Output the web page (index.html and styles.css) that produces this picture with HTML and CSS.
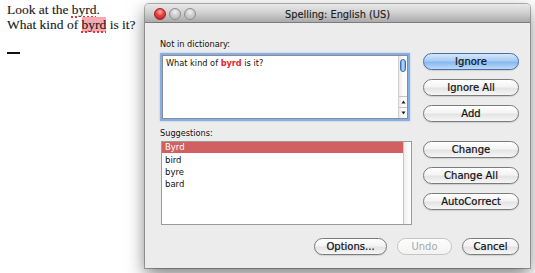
FILE: index.html
```html
<!DOCTYPE html>
<html>
<head>
<meta charset="utf-8">
<link rel="stylesheet" href="styles.css">
</head>
<body>
<div class="doc">
  <p class="line">Look at the <span class="typo">byrd</span>.</p>
  <p class="line">What kind of <span class="typo hl">byrd</span> is it?</p>
  <div class="cursor"></div>
</div>
<div class="window">
  <div class="titlebar">
    <div class="lights">
      <span class="light close"></span>
      <span class="light"></span>
      <span class="light"></span>
    </div>
    <div class="title">Spelling: English (US)</div>
    <div></div>
  </div>
  <div class="content">
    <div class="label">Not in dictionary:</div>
    <div></div>
    <div class="textbox">
      <div class="tb-text">What kind of <b class="miss">byrd</b> is it?</div>
      <div class="vscroll">
        <div class="thumb"></div>
        <div class="track"></div>
        <div class="arrow"><svg width="5" height="4" viewBox="0 0 5 4"><path d="M2.5 0.5 L4.5 3.5 L0.5 3.5 Z" fill="#222"/></svg></div>
        <div class="arrow"><svg width="5" height="4" viewBox="0 0 5 4"><path d="M0.5 0.5 L4.5 0.5 L2.5 3.5 Z" fill="#222"/></svg></div>
      </div>
    </div>
    <div class="btngroup">
      <div class="btn default">Ignore</div>
      <div class="btn">Ignore All</div>
      <div class="btn">Add</div>
    </div>
    <div class="label label2">Suggestions:</div>
    <div></div>
    <div class="list">
      <div class="items">
        <div class="item sel">Byrd</div>
        <div class="item">bird</div>
        <div class="item">byre</div>
        <div class="item">bard</div>
      </div>
      <div class="ltrack"></div>
    </div>
    <div class="btngroup">
      <div class="btn">Change</div>
      <div class="btn">Change All</div>
      <div class="btn">AutoCorrect</div>
    </div>
  </div>
  <div class="footer">
    <div class="btn w-options">Options...</div>
    <div class="btn disabled w-undo">Undo</div>
    <div class="btn w-cancel">Cancel</div>
  </div>
</div>
</body>
</html>
```
FILE: styles.css
```css
html, body {
  margin: 0;
  padding: 0;
  background: #ffffff;
}
body {
  display: flex;
  align-items: flex-start;
  width: 535px;
  height: 273px;
  overflow: hidden;
}
.doc {
  width: 145px;
  box-sizing: border-box;
  padding: 2px 0 0 7px;
  font-family: "Liberation Serif", serif;
  font-size: 13.5px;
  line-height: 15px;
  color: #1a1a1a;
  -webkit-text-stroke: 0.12px #1a1a1a;
}
.line {
  margin: 0;
  white-space: nowrap;
}
.typo {
  text-decoration: underline dotted #e0363b;
  text-decoration-thickness: 1.5px;
  text-underline-offset: 2px;
}
.hl {
  background: #f6a9b1;
}
.cursor {
  width: 13px;
  height: 2px;
  background: #111;
  margin-top: 20px;
}
.window {
  width: 385px;
  height: 264px;
  margin-top: 4px;
  background: #ececec;
  border-radius: 4px 4px 0 0;
  box-shadow: 0 0 0 1px rgba(0,0,0,0.28), 0 7px 18px rgba(0,0,0,0.5);
  display: flex;
  flex-direction: column;
  font-family: "DejaVu Sans", sans-serif;
  color: #1a1a1a;
}
.titlebar {
  height: 18px;
  border-bottom: 1px solid #7c7c7c;
  border-radius: 4px 4px 0 0;
  background: linear-gradient(#e9e9e9, #cfcfcf 50%, #aaaaaa);
  display: grid;
  grid-template-columns: 1fr auto 1fr;
  align-items: center;
}
.lights {
  display: flex;
  gap: 3px;
  padding-left: 9px;
  padding-top: 2px;
}
.light {
  width: 12px;
  height: 12px;
  border-radius: 50%;
  box-sizing: border-box;
  border: 1px solid #8d8d8d;
  background: radial-gradient(circle at 50% 30%, #f2f2f2 0%, #cdcdcd 45%, #b4b4b4 100%);
}
.light.close {
  border-color: #93252a;
  background: radial-gradient(circle at 50% 30%, #ffb3b0 0%, #ec4740 40%, #b8161a 100%);
}
.title {
  font-size: 9.8px;
  color: #1e1e1e;
  padding-top: 2px;
  white-space: nowrap;
  -webkit-text-stroke: 0.15px #1e1e1e;
}
.content {
  display: grid;
  grid-template-columns: 252px 96px;
  grid-template-rows: 15px 68px 20px 84px;
  column-gap: 11px;
  padding: 15px 11px 0 15px;
}
.label {
  font-size: 8.2px;
  line-height: 12px;
  white-space: nowrap;
  color: #111;
}
.label2 {
  padding-top: 6px;
}
.textbox {
  margin: 2px 0 2px 2px;
  width: 246px;
  height: 64px;
  box-sizing: border-box;
  border: 1px solid #8c8c8c;
  background: #fff;
  box-shadow: 0 0 0 2px #86aee6, 0 0 2px 2px #a9c6ee;
  display: flex;
}
.tb-text {
  flex: 1;
  font-size: 8.2px;
  line-height: 11px;
  padding: 2px 3px;
  white-space: nowrap;
  color: #111;
}
.miss {
  color: #e8262c;
}
.vscroll {
  width: 8px;
  border-left: 1px solid #d0d0d0;
  background: linear-gradient(90deg, #e8e8e8, #fafafa 40%, #ffffff);
  display: flex;
  flex-direction: column;
  align-items: center;
}
.thumb {
  width: 6px;
  height: 13px;
  margin-top: 3px;
  border-radius: 3px;
  box-sizing: border-box;
  border: 1px solid #3b6cb0;
  background: linear-gradient(90deg, #5d97e0, #c7defa 50%, #6ea3e6);
}
.track {
  flex: 1;
}
.arrow {
  width: 8px;
  height: 11px;
  border-top: 1px solid #c4c4c4;
  box-sizing: border-box;
  display: flex;
  align-items: center;
  justify-content: center;
}
.btngroup {
  display: flex;
  flex-direction: column;
  gap: 9px;
}
.btn {
  height: 17px;
  box-sizing: border-box;
  border: 1px solid #7b7b7b;
  border-radius: 9px;
  background: linear-gradient(#ffffff, #f4f4f4 45%, #e4e4e4 55%, #f6f6f6);
  font-size: 10px;
  line-height: 15px;
  text-align: center;
  color: #111;
  white-space: nowrap;
  box-shadow: 0 1px 1px rgba(0,0,0,0.12);
  -webkit-text-stroke: 0.2px #111;
}
.btn.default {
  border-color: #4a6fa8;
  background: linear-gradient(#d6e7fb, #a9cdf4 45%, #86b9ef 55%, #bcdcfa);
}
.btn.disabled {
  border-color: #c4c4c4;
  color: #a8a8a8;
  -webkit-text-stroke: 0;
  background: linear-gradient(#fdfdfd, #f3f3f3);
  box-shadow: none;
}
.list {
  margin-left: 1px;
  width: 251px;
  height: 84px;
  box-sizing: border-box;
  border: 1px solid #9a9a9a;
  background: #fff;
  display: flex;
}
.items {
  flex: 1;
}
.item {
  height: 12px;
  line-height: 12px;
  font-size: 8.5px;
  padding-left: 3px;
  color: #111;
}
.item.sel {
  background: #d36060;
  color: #ffffff;
  height: 11px;
  line-height: 11px;
  margin-bottom: 1px;
}
.ltrack {
  width: 7px;
  border-left: 1px solid #c8c8c8;
  background: linear-gradient(90deg, #eeeeee, #ffffff);
}
.footer {
  display: flex;
  justify-content: flex-end;
  gap: 10px;
  padding: 13px 11px 0 0;
}
.w-options { width: 73px; }
.w-undo { width: 55px; }
.w-cancel { width: 57px; }
```
